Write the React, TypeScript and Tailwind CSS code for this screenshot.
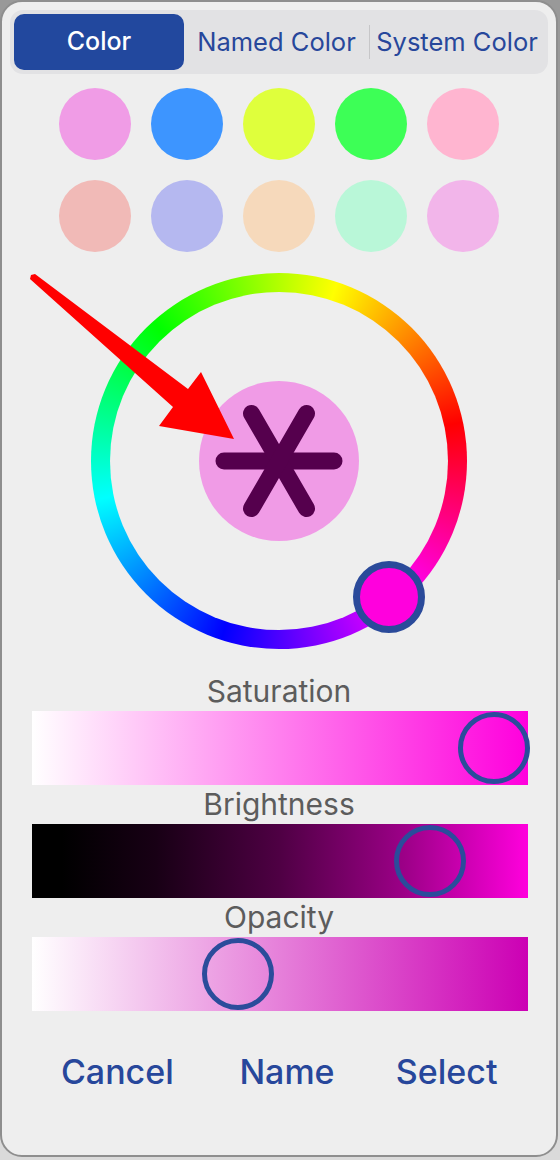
const swatches = [
  ["#f09ce6", "#3d95ff", "#dfff3c", "#3dff56", "#ffb5d0"],
  ["#f1bab7", "#b5b8f0", "#f6d9bb", "#b9f7d8", "#f2b5ea"],
];

function Slider({
  label,
  track,
  knobLeft,
}: {
  label: string;
  track: string;
  knobLeft: number;
}) {
  return (
    <div className="flex flex-col">
      <div className="h-[39px] text-center text-[30px] leading-[39px] text-[#5c5c5c]">
        {label}
      </div>
      <div className={`relative ml-[30px] mr-[28px] h-[74px] ${track}`}>
        <div
          className="absolute top-px h-[72px] w-[72px] rounded-full border-[5px] border-[#2b4c9b]"
          style={{ left: knobLeft }}
        />
      </div>
    </div>
  );
}

function Wheel() {
  return (
    <div className="relative mx-auto mt-[21px] h-[376px] w-[376px] rounded-full bg-[conic-gradient(from_78deg,#ff0000,#ff00ff,#0000ff,#00ffff,#00ff00,#ffff00,#ff0000)]">
      <div className="absolute inset-[19px] flex items-center justify-center rounded-full bg-[#eeeeee]">
        <div className="h-[160px] w-[160px] rounded-full bg-[#f09be6]">
          <svg width="160" height="160" viewBox="0 0 160 160">
            <g stroke="#55004d" strokeWidth="17" strokeLinecap="round">
              <line x1="25" y1="80" x2="135" y2="80" />
              <line x1="52.5" y1="32.4" x2="107.5" y2="127.6" />
              <line x1="107.5" y1="32.4" x2="52.5" y2="127.6" />
            </g>
          </svg>
        </div>
      </div>
      <div className="absolute left-[262px] top-[288px] h-[72px] w-[72px] rounded-full border-[7px] border-[#2a4a9a] bg-[#ff00dd]" />
    </div>
  );
}

export default function App() {
  return (
    <div className="relative h-[1160px] w-[560px] bg-[linear-gradient(#999999_0,#999999_50%,#dadada_50%)] font-['Inter',sans-serif]">
      <div className="flex h-[1157px] w-[558px] flex-col rounded-[22px] border-2 border-[#8e8e8e] bg-[#eeeeee]">
        <div className="mx-[8px] mt-[8px] flex h-[64px] items-center rounded-[13px] bg-[#e2e2e4] p-[4px]">
          <div className="flex h-[56px] w-[170px] items-center justify-center rounded-[10px] bg-[#22489e] text-[25px] font-medium text-white">
            Color
          </div>
          <div className="flex h-[56px] w-[185px] items-center justify-center text-[25.5px] text-[#27479b]">
            Named Color
          </div>
          <div className="h-[34px] w-px bg-[#c6c6c8]" />
          <div className="flex h-[56px] flex-1 items-center justify-center text-[25.5px] text-[#27479b]">
            System Color
          </div>
        </div>

        <div className="mt-[14px] flex flex-col items-center gap-[20px]">
          {swatches.map((row, i) => (
            <div key={i} className="flex gap-[20px]">
              {row.map((c) => (
                <div
                  key={c}
                  className="h-[72px] w-[72px] rounded-full"
                  style={{ backgroundColor: c }}
                />
              ))}
            </div>
          ))}
        </div>

        <Wheel />

        <div className="mt-[23px] flex flex-col">
          <Slider
            label="Saturation"
            track="bg-[linear-gradient(to_right,#ffffff,#ff00dd)]"
            knobLeft={426}
          />
          <Slider
            label="Brightness"
            track="bg-[linear-gradient(to_right,#000000_0%,#000000_6%,#180015_25%,#4f0044_50%,#9c0087_75%,#ff00dd_100%)]"
            knobLeft={362}
          />
          <Slider
            label="Opacity"
            track="bg-[linear-gradient(to_right,#ffffff,#cc00b4)]"
            knobLeft={170}
          />
        </div>

        <div className="mt-[41px] grid grid-cols-3 pl-[33px] pr-[27px] text-center text-[34px] font-medium leading-[40px] text-[#27479b]">
          <span>Cancel</span>
          <span className="pl-[10px]">Name</span>
          <span>Select</span>
        </div>
      </div>

      <svg
        className="pointer-events-none absolute left-0 top-0"
        width="560"
        height="1160"
        viewBox="0 0 560 1160"
      >
        <polygon
          fill="#ff0000"
          points="30,279 31,275 35,274 188,389 201,372 234,439 159,426 173,407"
        />
      </svg>
    </div>
  );
}
